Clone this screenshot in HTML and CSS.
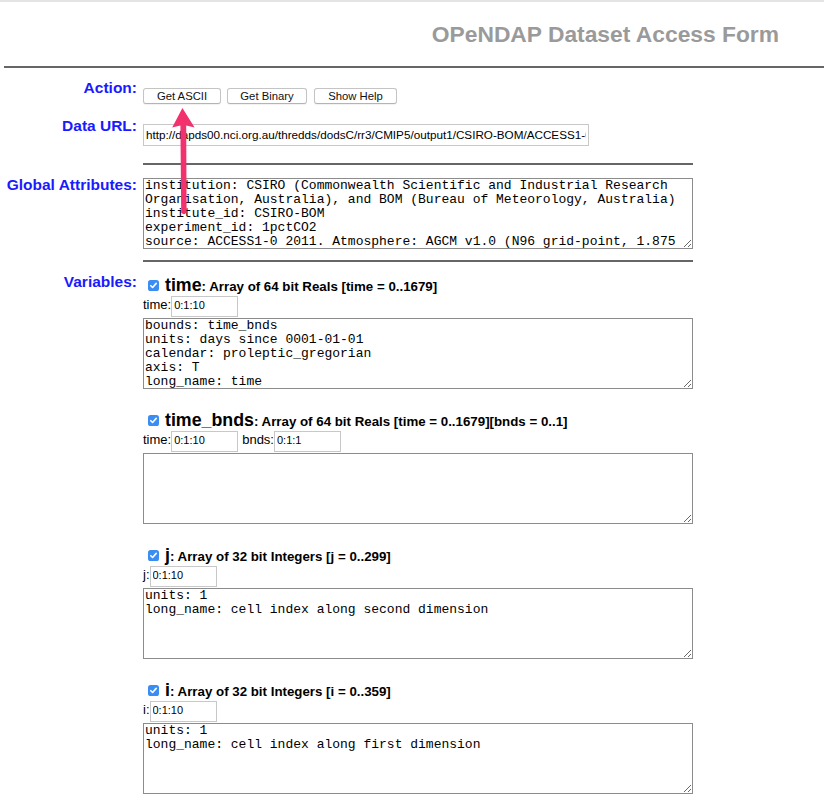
FILE: index.html
```html
<!DOCTYPE html>
<html lang="en">
<head>
<meta charset="utf-8">
<title>OPeNDAP Dataset Access Form</title>
<link rel="stylesheet" href="styles.css">
</head>
<body>
<div class="page">
  <h2 class="title">OPeNDAP Dataset Access Form</h2>
  <hr class="rule-main">
  <form class="form" action="#">
    <div class="row row-action">
      <h3 class="lbl"><a href="#disposition">Action:</a></h3>
      <div class="cell cell-action">
        <button type="button" class="btn btn-ascii">Get ASCII</button>
        <button type="button" class="btn btn-binary">Get Binary</button>
        <button type="button" class="btn btn-help">Show Help</button>
      </div>
    </div>

    <div class="row row-url">
      <h3 class="lbl"><a href="#data_url">Data URL:</a></h3>
      <div class="cell cell-url">
        <input class="url" type="text" name="url" value="http://dapds00.nci.org.au/thredds/dodsC/rr3/CMIP5/output1/CSIRO-BOM/ACCESS1-0/1pctCO2/mon/atmos/Amon/r1i1p1/latest/tas/tas_Amon_ACCESS1-0_1pctCO2_r1i1p1_030001-043912.nc">
      </div>
    </div>

    <div class="row row-rule">
      <div></div>
      <div class="cell"><hr class="rule"></div>
    </div>

    <div class="row row-global">
      <h3 class="lbl"><a href="#global_attr">Global Attributes:</a></h3>
      <div class="cell cell-global">
        <textarea class="attr" name="global_attr">institution: CSIRO (Commonwealth Scientific and Industrial Research Organisation, Australia), and BOM (Bureau of Meteorology, Australia)
institute_id: CSIRO-BOM
experiment_id: 1pctCO2
source: ACCESS1-0 2011. Atmosphere: AGCM v1.0 (N96 grid-point, 1.875 degrees EW x approx 1.25 degree NS, 38 levels); ocean: NOAA/GFDL MOM4p1 (nominal 1.0 degree EW x 1.0 degrees NS, tripolar north of 65N, equatorial refinement to 1/3 degree from 10S to 10N, cosine dependent NS south of 25S, 50 levels); sea ice: CICE4.1 (nominal 1.0 degree EW x 1.0 degrees NS, tripolar north of 65N, equatorial refinement to 1/3 degree from 10S to 10N, cosine dependent NS south of 25S); land: MOSES2 (1.875 degree EW x 1.25 degree NS, 4 levels
model_id: ACCESS1-0
forcing: GHG, Oz, SA, Sl, Vl, BC, OC, (GHG = CO2, N2O, CH4, CFC11, CFC12, CFC113, HCFC22, HFC125, HFC134a)</textarea>
      </div>
    </div>

    <div class="row row-rule row-rule2">
      <div></div>
      <div class="cell"><hr class="rule"></div>
    </div>

    <div class="row row-vars">
      <h3 class="lbl"><a href="#dataset_variables">Variables:</a></h3>
      <div class="cell cell-vars">

        <div class="var">
          <div class="vhead"><svg class="chk" width="11" height="11" viewBox="0 0 11 11" aria-hidden="true"><rect x="0" y="0" width="11" height="11" rx="2.6" fill="#3a8df2"/><path d="M2.8 5.7 L4.6 7.5 L8.2 3.4" fill="none" stroke="#fff" stroke-width="1.6" stroke-linecap="round" stroke-linejoin="round"/></svg><span class="vname">time</span><span class="vdesc">: Array of 64 bit Reals [time = 0..1679]</span></div>
          <div class="vrow"><span class="dlbl">time:</span><input class="dim" type="text" value="0:1:10"></div>
          <textarea class="attr">bounds: time_bnds
units: days since 0001-01-01
calendar: proleptic_gregorian
axis: T
long_name: time
standard_name: time</textarea>
        </div>

        <div class="var">
          <div class="vhead"><svg class="chk" width="11" height="11" viewBox="0 0 11 11" aria-hidden="true"><rect x="0" y="0" width="11" height="11" rx="2.6" fill="#3a8df2"/><path d="M2.8 5.7 L4.6 7.5 L8.2 3.4" fill="none" stroke="#fff" stroke-width="1.6" stroke-linecap="round" stroke-linejoin="round"/></svg><span class="vname">time_bnds</span><span class="vdesc">: Array of 64 bit Reals [time = 0..1679][bnds = 0..1]</span></div>
          <div class="vrow"><span class="dlbl">time:</span><input class="dim" type="text" value="0:1:10"><span class="dlbl dlbl-next">bnds:</span><input class="dim" type="text" value="0:1:1"></div>
          <textarea class="attr"></textarea>
        </div>

        <div class="var">
          <div class="vhead"><svg class="chk" width="11" height="11" viewBox="0 0 11 11" aria-hidden="true"><rect x="0" y="0" width="11" height="11" rx="2.6" fill="#3a8df2"/><path d="M2.8 5.7 L4.6 7.5 L8.2 3.4" fill="none" stroke="#fff" stroke-width="1.6" stroke-linecap="round" stroke-linejoin="round"/></svg><span class="vname">j</span><span class="vdesc">: Array of 32 bit Integers [j = 0..299]</span></div>
          <div class="vrow"><span class="dlbl">j:</span><input class="dim" type="text" value="0:1:10"></div>
          <textarea class="attr">units: 1
long_name: cell index along second dimension</textarea>
        </div>

        <div class="var">
          <div class="vhead"><svg class="chk" width="11" height="11" viewBox="0 0 11 11" aria-hidden="true"><rect x="0" y="0" width="11" height="11" rx="2.6" fill="#3a8df2"/><path d="M2.8 5.7 L4.6 7.5 L8.2 3.4" fill="none" stroke="#fff" stroke-width="1.6" stroke-linecap="round" stroke-linejoin="round"/></svg><span class="vname">i</span><span class="vdesc">: Array of 32 bit Integers [i = 0..359]</span></div>
          <div class="vrow"><span class="dlbl">i:</span><input class="dim" type="text" value="0:1:10"></div>
          <textarea class="attr">units: 1
long_name: cell index along first dimension</textarea>
        </div>

      </div>
    </div>
  </form>

  <svg class="arrow" width="32" height="114" viewBox="168 104 32 114" aria-hidden="true">
    <path d="M182.4 108 L194.6 127.6 L186.2 125.4 L186.6 212.5 Q184 215.8 181.2 212.5 L180.4 125.4 L172.2 127.6 Z" fill="#f2326e"/>
  </svg>
</div>
</body>
</html>
```
FILE: styles.css
```css
* { box-sizing: border-box; }

html, body {
  margin: 0;
  padding: 0;
  background: #fff;
}

body {
  font-family: "Liberation Sans", Arial, Helvetica, sans-serif;
  color: #000;
}

.page {
  position: relative;
  border-top: 2px solid #e4e4e4;
  min-height: 805px;
}

.title {
  margin: 0;
  padding: 19px 45px 0 0;
  text-align: right;
  font-size: 22.8px;
  line-height: 26px;
  font-weight: bold;
  color: #9a9a9a;
}

.rule-main {
  margin: 19px 0 0 4px;
  height: 0;
  border: 0;
  border-top: 2px solid #666;
}

.form { margin: 0; }

.row {
  display: grid;
  grid-template-columns: 137px 550px;
  column-gap: 6px;
}

.lbl {
  margin: 0;
  text-align: right;
  font-size: 15.5px;
  line-height: 18px;
  font-weight: bold;
}

.lbl a {
  color: #1a1aff;
  text-decoration: none;
}

.row-action { margin-top: 11px; }
.cell-action {
  padding-top: 9px;
  display: flex;
  gap: 6px;
}

.btn {
  height: 16px;
  padding: 0;
  margin: 0;
  font-family: "Liberation Sans", Arial, sans-serif;
  font-size: 11.3px;
  line-height: 14px;
  color: #111;
  background: #fff;
  border: 1px solid #c4c4c4;
  border-bottom-color: #b4b4b4;
  border-radius: 3px;
  box-shadow: 0 1px 1px rgba(0, 0, 0, 0.06);
}
.btn-ascii { width: 78px; }
.btn-binary { width: 80px; }
.btn-help { width: 83px; margin-left: 1px; }

.row-url { margin-top: 13px; }
.cell-url { padding-top: 7px; }

.url {
  display: block;
  width: 446px;
  height: 22px;
  margin: 0;
  padding: 1px 2px 3px;
  border: 1px solid #c8c8c8;
  font-family: "Liberation Sans", Arial, sans-serif;
  font-size: 11.7px;
  color: #000;
  background: #fff;
}

.row-rule { margin-top: 17px; }
.row-rule2 { margin-top: 11px; }

.rule {
  margin: 0;
  height: 0;
  border: 0;
  border-top: 2px solid #666;
}

.row-global { margin-top: 11px; }
.cell-global { padding-top: 2px; }

.attr {
  display: block;
  width: 550px;
  height: 71px;
  margin: 0;
  padding: 0 1px;
  border: 1px solid #8c8c8c;
  font-family: "Liberation Mono", "Courier New", monospace;
  font-size: 13px;
  line-height: 14px;
  color: #000;
  background: #fff;
  overflow: hidden;
  resize: both;
}

.row-vars { margin-top: 11px; }
.cell-vars { padding-top: 1px; }

.var { margin-bottom: 20px; }

.vhead {
  height: 22px;
  line-height: 22px;
  font-size: 13.3px;
  font-weight: bold;
  white-space: nowrap;
}

.chk {
  display: inline-block;
  vertical-align: baseline;
  margin: 0 6px 0 5px;
}

.vname { font-size: 17.8px; }
.vdesc { font-size: 13.3px; }

.vrow {
  display: flex;
  align-items: baseline;
  height: 22px;
  font-size: 13px;
  line-height: 15px;
}

.dlbl { white-space: nowrap; }
.dlbl-next { margin-left: 4px; }

.dim {
  width: 67px;
  height: 21px;
  margin: 0;
  padding: 1px 2px 4px;
  border: 1px solid #c8c8c8;
  font-family: "Liberation Sans", Arial, sans-serif;
  font-size: 11px;
  color: #000;
  background: #fff;
}

.arrow {
  position: absolute;
  left: 168px;
  top: 102px;
}
```
